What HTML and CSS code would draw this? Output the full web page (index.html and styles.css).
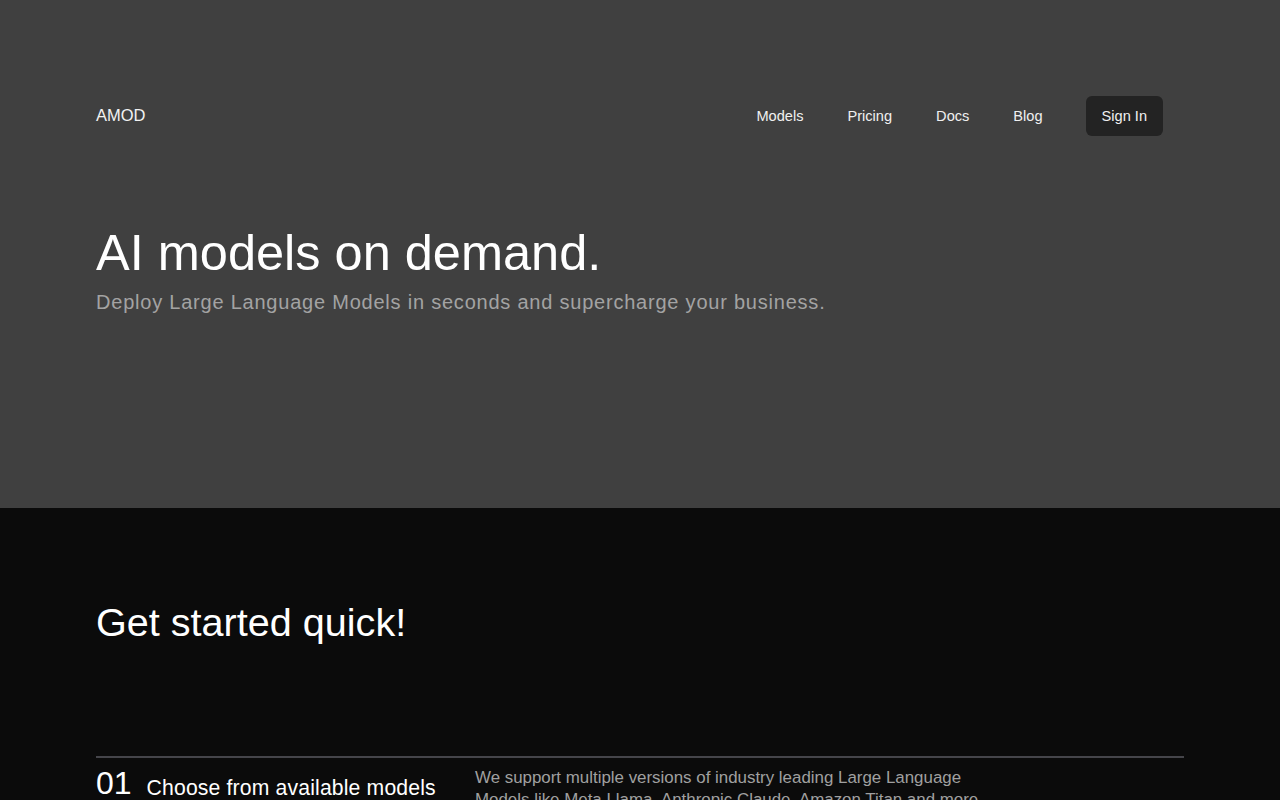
FILE: index.html
```html
<!DOCTYPE html>
<html lang="en">
<head>
<meta charset="utf-8">
<title>AMOD - AI models on demand</title>
<link rel="stylesheet" href="styles.css">
</head>
<body>
<section class="hero">
  <header class="topbar">
    <a class="brand" href="#">AMOD</a>
    <nav class="nav">
      <a class="nav-link" href="#">Models</a>
      <a class="nav-link" href="#">Pricing</a>
      <a class="nav-link" href="#">Docs</a>
      <a class="nav-link" href="#">Blog</a>
      <a class="nav-link signin" href="#">Sign In</a>
    </nav>
  </header>
  <div class="hero-copy">
    <h1 class="hero-title">AI models on demand.</h1>
    <p class="hero-sub">Deploy Large Language Models in seconds and supercharge your business.</p>
  </div>
</section>
<section class="steps">
  <h2 class="steps-title">Get started quick!</h2>
  <div class="step">
    <div class="step-head">
      <span class="step-num">01</span>
      <span class="step-name">Choose from available models</span>
    </div>
    <p class="step-desc">We support multiple versions of industry leading Large Language Models like Meta Llama, Anthropic Claude, Amazon Titan and more.</p>
  </div>
</section>
</body>
</html>
```
FILE: styles.css
```css
* { box-sizing: border-box; }
html, body { margin: 0; padding: 0; }
body {
  font-family: "Liberation Sans", Arial, sans-serif;
  background: #0b0b0b;
  color: #fff;
}
a { color: inherit; text-decoration: none; }

.hero {
  background: #404040;
  height: 508px;
  padding: 96px 96px 0;
}
.topbar {
  display: flex;
  align-items: center;
  justify-content: space-between;
  height: 40px;
}
.brand {
  font-size: 16.5px;
  color: #f2f2f2;
  margin-top: -2px;
}
.nav {
  display: flex;
  align-items: center;
  gap: 12px;
  margin-right: 21px;
}
.nav-link {
  font-size: 14.6px;
  color: #f0f0f0;
  padding: 0 16px;
  line-height: 40px;
}
.signin {
  background: #232323;
  border-radius: 6px;
  margin-left: 15px;
}
.hero-copy {
  margin-top: 88px;
}
.hero-title {
  margin: 0;
  font-size: 50.5px;
  font-weight: 400;
  line-height: 57px;
  color: #fff;
}
.hero-sub {
  margin: 10px 0 0;
  font-size: 20px;
  line-height: 23px;
  letter-spacing: 0.78px;
  color: #a3a3a3;
}

.steps {
  padding: 91px 96px 0;
}
.steps-title {
  margin: 0;
  font-size: 39.6px;
  font-weight: 400;
  line-height: 46px;
  color: #fff;
}
.step {
  margin-top: 111px;
  border-top: 2px solid #45454a;
  display: grid;
  grid-template-columns: 379px 520px;
  padding-top: 7px;
}
.step-head {
  display: flex;
  align-items: baseline;
  gap: 15px;
}
.step-num {
  font-size: 32px;
  line-height: 36px;
  color: #fff;
}
.step-name {
  font-size: 21.2px;
  letter-spacing: 0.15px;
  position: relative;
  top: 1px;
  color: #fff;
}
.step-desc {
  margin: 2px 0 0;
  font-size: 16.9px;
  line-height: 22px;
  color: #a0a0a0;
}
```
